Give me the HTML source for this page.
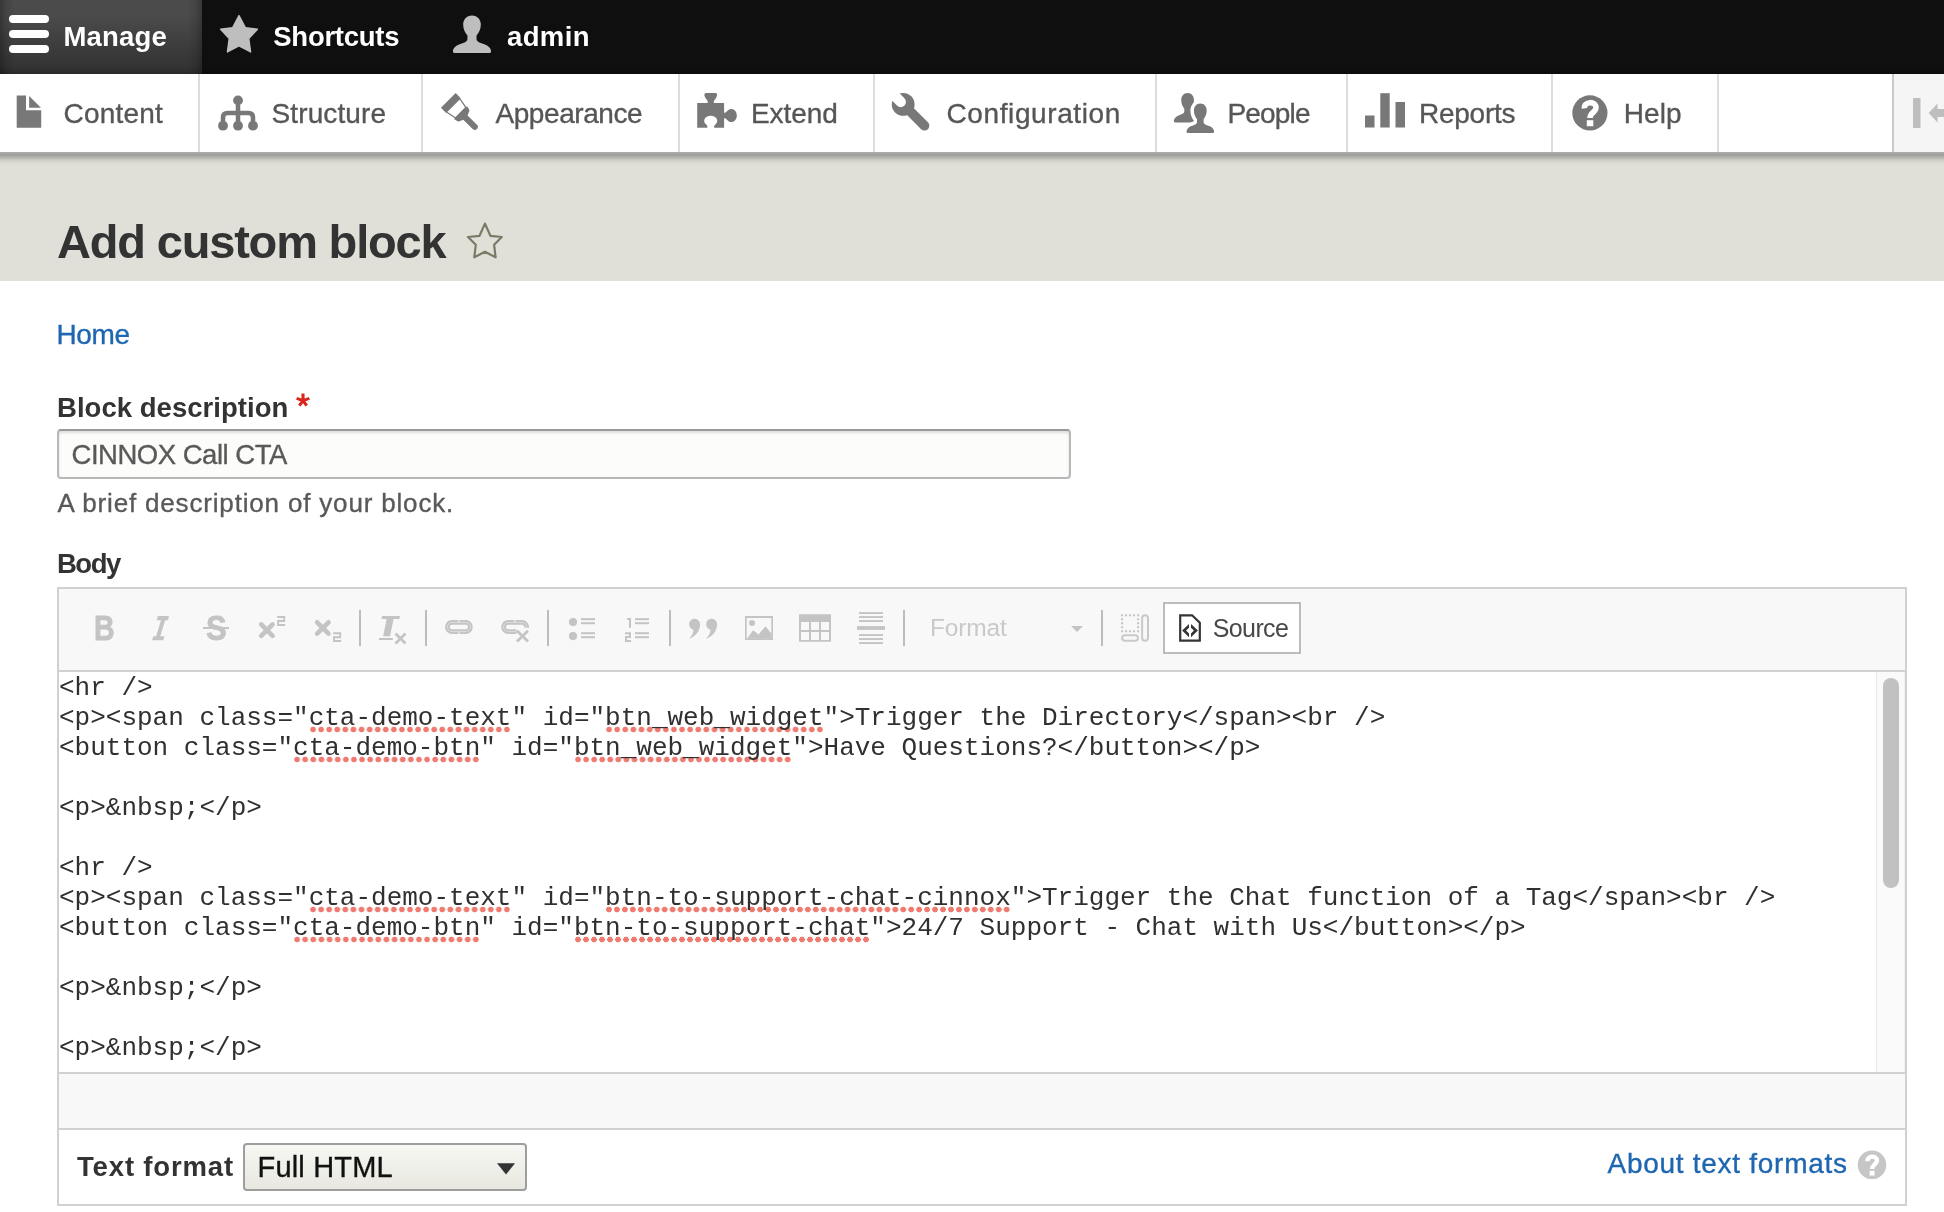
<!DOCTYPE html>
<html lang="en">
<head>
<meta charset="utf-8">
<title>Add custom block | Drupal</title>
<style>
html,body{margin:0;padding:0}
body{width:1944px;height:1212px;overflow:hidden;background:#fff;position:relative;font-family:"Liberation Sans",sans-serif}
.abs,.t{position:absolute}
.t{white-space:nowrap;line-height:1}
#page{position:absolute;left:0;top:0;width:1944px;height:1212px;overflow:hidden;will-change:transform;transform:translateZ(0)}
#bar{left:0;top:0;width:1944px;height:74px;background:#0f0f0f}
#manage{left:0;top:0;width:202px;height:74px;background:linear-gradient(90deg,rgba(0,0,0,.27),rgba(0,0,0,.1) 6px,rgba(0,0,0,0) 15px,rgba(0,0,0,0) 187px,rgba(0,0,0,.1) 196px,rgba(0,0,0,.27)),linear-gradient(rgba(255,255,255,.25) 20%,rgba(255,255,255,0) 200%),#0f0f0f}
#tray{left:-30px;top:74px;width:2004px;height:78px;background:#fff;box-shadow:0 2px 6px 2px rgba(0,0,0,.3333);border-bottom:2px solid #aaa;box-sizing:content-box}
.dv{top:74px;width:2px;height:78px;background:#ddd}
#hdr{left:0;top:152px;width:1944px;height:129px;background:#e0e0d8}
#toggle{left:1892px;top:74px;width:52px;height:78px;background:#f5f5f5;border-left:2px solid #c9c9c9}
#inp{left:57px;top:429px;width:1010px;height:46px;border:2px solid #b8b8b8;border-top-color:#999;border-radius:4px;background:#fcfcfa;box-shadow:inset 0 2px 3px rgba(0,0,0,.125)}
#wrap{left:57px;top:587px;width:1846px;height:615px;border:2px solid #d1d1d1;background:#fff}
#tb{left:59px;top:589px;width:1846px;height:81px;background:#f8f8f8;border-bottom:2px solid #d1d1d1}
#ta{left:59px;top:672px;width:1817px;height:400px;background:#fff;overflow:hidden}
#sbar{left:1876px;top:672px;width:29px;height:400px;background:#fafafa;box-shadow:inset 1px 0 0 #e8e8e8,inset -1px 0 0 #f0f0f0}
#thumb{left:1883px;top:678px;width:16px;height:210px;border-radius:8px;background:#c1c1c1}
#bot{left:59px;top:1072px;width:1846px;height:54px;background:#f8f8f8;border-top:2px solid #d1d1d1;border-bottom:2px solid #d1d1d1}
pre{margin:0;font-family:"Liberation Mono",monospace;font-size:26px;line-height:30px;color:#303030;position:absolute;left:0;top:1px;white-space:pre}
pre u{text-decoration:none;background-image:radial-gradient(circle at 50% 50%,#ee7a70 2.5px,rgba(238,122,112,0) 3.2px);background-size:8px 7px;background-repeat:round no-repeat;background-position:0 22.7px}
.sep{top:610px;width:2px;height:36px;background:#bcbcbc}
#src{left:1163px;top:602px;width:134px;height:48px;border:2px solid #bcbcbc;background:#fff}
#sel{left:243px;top:1143px;width:280px;height:44px;border:2px solid #9e9e9e;border-radius:4px;background:linear-gradient(#f7f7f3,#e8e8e0)}
</style>
</head>
<body>
<div id="page">
<div id="bar" class="abs"></div>
<div id="manage" class="abs"></div>
<div id="hdr" class="abs"></div>
<div id="tray" class="abs"></div>
<div class="abs dv" style="left:198px"></div>
<div class="abs dv" style="left:421px"></div>
<div class="abs dv" style="left:678px"></div>
<div class="abs dv" style="left:873px"></div>
<div class="abs dv" style="left:1155px"></div>
<div class="abs dv" style="left:1346px"></div>
<div class="abs dv" style="left:1551px"></div>
<div class="abs dv" style="left:1717px"></div>
<div id="toggle" class="abs"></div>
<div id="inp" class="abs"></div>
<div id="wrap" class="abs"></div>
<div id="tb" class="abs"></div>
<div id="ta" class="abs"><pre>&lt;hr /&gt;
&lt;p&gt;&lt;span class="<u>cta-demo-text</u>" id="<u>btn_web_widget</u>"&gt;Trigger the Directory&lt;/span&gt;&lt;br /&gt;
&lt;button class="<u>cta-demo-btn</u>" id="<u>btn_web_widget</u>"&gt;Have Questions?&lt;/button&gt;&lt;/p&gt;

&lt;p&gt;&amp;nbsp;&lt;/p&gt;

&lt;hr /&gt;
&lt;p&gt;&lt;span class="<u>cta-demo-text</u>" id="<u>btn-to-support-chat-cinnox</u>"&gt;Trigger the Chat function of a Tag&lt;/span&gt;&lt;br /&gt;
&lt;button class="<u>cta-demo-btn</u>" id="<u>btn-to-support-chat</u>"&gt;24/7 Support - Chat with Us&lt;/button&gt;&lt;/p&gt;

&lt;p&gt;&amp;nbsp;&lt;/p&gt;

&lt;p&gt;&amp;nbsp;&lt;/p&gt;</pre></div>
<div id="sbar" class="abs"></div>
<div id="thumb" class="abs"></div>
<div id="bot" class="abs"></div>
<div class="abs sep" style="left:359px"></div>
<div class="abs sep" style="left:425px"></div>
<div class="abs sep" style="left:547px"></div>
<div class="abs sep" style="left:669px"></div>
<div class="abs sep" style="left:903px"></div>
<div class="abs sep" style="left:1101px"></div>
<div id="src" class="abs"></div>
<div id="sel" class="abs"></div>
<svg class="abs" style="left:0;top:0" width="1944" height="1212" viewBox="0 0 1944 1212">
<defs>
<path id="person" d="M0,-7.3C-4.2,-7.3 -6.4,-3.8 -6.4,-0.3C-6.4,3.5 -4.8,6.6 -3.3,8.3V11C-3.3,13.2 -6,14 -9,15.2C-12,16.4 -13.8,18.6 -13.8,20.8Q-13.8,22.1 -12.5,22.1H12.5Q13.8,22.1 13.8,20.8C13.8,18.6 12,16.4 9,15.2C6,14 3.3,13.2 3.3,11V8.3C4.8,6.6 6.4,3.5 6.4,-0.3C6.4,-3.8 4.2,-7.3 0,-7.3Z"/>
</defs>
<!-- top bar: hamburger -->
<g fill="#fff">
<rect x="9" y="15" width="40" height="8" rx="4"/>
<rect x="9" y="30" width="40" height="8" rx="4"/>
<rect x="9" y="45" width="40" height="8" rx="4"/>
</g>
<!-- shortcuts star -->
<polygon fill="#bebebe" stroke="#bebebe" stroke-width="1.4" stroke-linejoin="round" points="239,15.6 245.3,27.6 257.4,29.2 248.8,38.6 250.6,52 239,45.9 227.4,52 229.2,38.6 220.6,29.2 232.7,27.6"/>
<!-- user -->
<use href="#person" fill="#bebebe" transform="translate(472,24.9) scale(1.38,1.275)"/>
<!-- tray icons -->
<g fill="#787878">
<!-- content -->
<path d="M16.7,95.4H26V110.2H41.2V127.8H16.7Z"/>
<path d="M29.1,95.9L41,107.8H29.1Z"/>
<!-- structure -->
<circle cx="238" cy="100.4" r="4.9"/><circle cx="223" cy="125.7" r="4.9"/><circle cx="238" cy="125.7" r="4.9"/><circle cx="253" cy="125.7" r="4.9"/>
<path d="M223,125.7V117.5Q223,113 227.5,113H248.5Q253,113 253,117.5V125.7M238,100.4V125.7" fill="none" stroke="#787878" stroke-width="4.5"/>
<!-- appearance (paint brush) -->
<g transform="translate(448.3,100.4) rotate(-45)">
<rect x="-10.4" y="0" width="20.8" height="6.9"/>
<path d="M-9.4,6.9L-7.4,17.5H7.4L9.4,6.9Z" fill="#fff" stroke="#787878" stroke-width="1.2"/>
<path d="M-8.4,17.3H8.4Q9.2,17.3 9,18.3L8.2,21.4Q7.9,22.4 6.8,22.6L3,24.2V37.5A3,3 0 0 1 -3,37.5V24.2L-6.8,22.6Q-7.9,22.4 -8.2,21.4L-9,18.3Q-9.2,17.3 -8.4,17.3Z"/>
</g>
<!-- extend (puzzle) -->
<path d="M697.2,103.1H707.5C708.5,101.5 707,100 705.5,98C704,96 704,93.1 706,93.1H715.5C717.5,93.1 717.5,96 716,98C714.5,100 713,101.5 714,103.1H724.1V112.5C725.5,113.5 727,111 729,109.5C731.5,108 736.8,109.5 736.8,115.5C736.8,121.5 731.5,123 729,121.5C727,120 725.5,117.5 724.1,118.5V127.8H714.3C713.3,126.3 714.8,125 716.3,123.5C718.5,121.2 717,115.8 710.7,115.8C704.4,115.8 703,121.2 705.2,123.5C706.7,125 708.2,126.3 707.2,127.8H697.2Z"/>
<!-- configuration (wrench) -->
<g transform="translate(903.2,104.4) rotate(45)">
<circle cx="0" cy="0" r="11.4"/>
<path d="M0,0H30.2" stroke="#787878" stroke-width="9.6" stroke-linecap="round" fill="none"/>
<path d="M-14,-5.2H-3.5A5.2,5.2 0 0 1 -3.5,5.2H-14Z" fill="#fff"/>
</g>
<!-- people -->
<use href="#person" transform="translate(1187.6,100.3)"/>
<use href="#person" transform="translate(1200.3,110.9)" stroke="#fff" stroke-width="7" paint-order="stroke"/>
<!-- reports -->
<rect x="1365" y="115.5" width="9.5" height="12"/><rect x="1380.3" y="93.2" width="9.4" height="34.3"/><rect x="1395.5" y="102" width="9.5" height="25.5"/>
<!-- help -->
<circle cx="1589.9" cy="112.9" r="17.6"/>
</g>
<path d="M1584.4,108.4C1583.6,101.2 1596,100.6 1596,107.6C1596,112.4 1590,112.6 1590,118" fill="none" stroke="#fff" stroke-width="5.6"/>
<rect x="1586.8" y="120.2" width="6.5" height="6" fill="#fff"/>
<!-- tray toggle -->
<g fill="#bebebe">
<rect x="1913" y="98" width="7.5" height="30"/>
<path d="M1928.7,113L1937.5,103.5V109H1944V117H1937.5V122.5Z"/>
</g>
<!-- shortcut star outline -->
<polygon fill="none" stroke="#7a7a66" stroke-width="2.2" stroke-linejoin="round" points="484.95,223.6 490.4,235.8 501.8,237 494.1,244.7 495.6,257.3 484.95,251.8 474.3,257.3 475.8,244.7 468,237 479.5,235.8"/>
<!-- required asterisk -->
<g stroke="#d9261c" stroke-width="3.1" stroke-linecap="butt">
<path d="M303,393.4V400.6M303,400.6L296.6,398.4M303,400.6L309.4,398.4M303,400.6L299.3,405.6M303,400.6L306.7,405.6"/>
</g>
<!-- CKEditor toolbar icons (disabled) -->
<g fill="#c4c4c4" stroke="none">
<!-- italic -->
<path d="M157.8,616H169L168,620.2H165.2L160.2,636.2H164.4L163.3,640.2H152.2L153.2,636.2H156.1L161,620.2H156.8Z"/>
<!-- strike line -->
<rect x="203" y="627" width="26" height="2"/>
<!-- superscript / subscript -->
<g stroke="#c4c4c4" fill="none">
<path d="M261.2,624.4L272.6,635.8M272.6,624.4L261.2,635.8" stroke-width="4.6" stroke-linecap="round"/>
<path d="M277.2,617H284.2V621H278.1V625H285.1" stroke-width="1.9"/>
<path d="M317.1,622.3L328.5,633.7M328.5,622.3L317.1,633.7" stroke-width="4.6" stroke-linecap="round"/>
<path d="M333.1,633.2H340.2V637.2H334V641H341.1" stroke-width="1.9"/>
<!-- remove format x -->
<path d="M395.5,633.5L405.5,643.5M405.5,633.5L395.5,643.5" stroke-width="2.8"/>
<!-- link -->
<rect x="447.4" y="622.4" width="23" height="9.2" rx="4.6" stroke-width="4.8"/>
<rect x="447.4" y="622.4" width="23" height="9.2" rx="4.6" stroke="#dcdcdc" stroke-width="1"/>
<path d="M458.9,620V622.6M458.9,631.4V634" stroke="#e4e4e4" stroke-width="1.6"/>
<!-- unlink -->
<path d="M516.5,631.6H508.2A4.6,4.6 0 0 1 508.2,622.4H522A4.6,4.6 0 0 1 526.5,627.6" stroke-width="4.8"/>
<path d="M516.5,631.6H508.2A4.6,4.6 0 0 1 508.2,622.4H522A4.6,4.6 0 0 1 526.5,627.6" stroke="#dcdcdc" stroke-width="1"/>
<path d="M515,620V622.6" stroke="#e4e4e4" stroke-width="1.6"/>
<path d="M517,630.8L528,641.4M528,630.8L517,641.4" stroke-width="2.8"/>
<!-- numbered list digits -->
<path d="M627.1,619.1H630V627.8" stroke-width="2"/>
<path d="M625,633.3H630V637.1H626V641H631" stroke-width="2"/>
<!-- show blocks -->
<path d="M1121.1,614.2h2v2h-2zM1121.1,630.2h2v2h-2zM1125.1,614.2h2v2h-2zM1125.1,630.2h2v2h-2zM1129.1,614.2h2v2h-2zM1129.1,630.2h2v2h-2zM1133.1,614.2h2v2h-2zM1133.1,630.2h2v2h-2zM1137.1,614.2h2v2h-2zM1137.1,630.2h2v2h-2zM1121.1,618.2h2v2h-2zM1137.1,618.2h2v2h-2zM1121.1,622.2h2v2h-2zM1137.1,622.2h2v2h-2zM1121.1,626.2h2v2h-2zM1137.1,626.2h2v2h-2z" fill="#c4c4c4" stroke="none"/>
<rect x="1142.1" y="615.2" width="5.9" height="25.6" rx="2.95" stroke="#c9c9c9" stroke-width="2"/>
<rect x="1122.1" y="635.2" width="15.9" height="5.6" rx="2.8" stroke="#c9c9c9" stroke-width="2"/>
</g>
<!-- remove format T -->
<path d="M382.1,616H400L399.3,619.1H393.6L390,636.2H383.1L386.6,619.1H381.4Z"/>
<rect x="379" y="638" width="13.8" height="2"/>
<!-- bullet list -->
<circle cx="573" cy="622.1" r="4.1"/><circle cx="573" cy="636.1" r="4.1"/>
<rect x="581" y="618.2" width="14" height="2"/><rect x="581" y="622.2" width="14" height="2"/><rect x="581" y="632.2" width="14" height="2"/><rect x="581" y="636.2" width="14" height="2"/>
<!-- numbered list lines -->
<rect x="635" y="618.2" width="14" height="2"/><rect x="635" y="622.2" width="14" height="2"/><rect x="635" y="632.2" width="14" height="2"/><rect x="635" y="636.2" width="14" height="2"/>
<!-- blockquote -->
<path id="q" d="M700.1,624.3A5.5,5.5 0 1 0 693.5,629.7C693.3,633 691.5,636 689,638.9C695.5,636.5 700.1,631 700.1,624.3Z"/>
<use href="#q" transform="translate(17,0)"/>
<!-- image -->
<path d="M745,616H773V640H745ZM746.7,618V638.4H771.3V618Z" fill-rule="evenodd"/>
<circle cx="752" cy="622.9" r="3"/>
<path d="M747,638.8L753.1,630.3L758.6,634.6L765.5,626.2L771.2,633.3V638.8Z"/>
<!-- table -->
<path d="M799,614.2H831V641.8H799ZM801,621.9V630.1H809V621.9ZM811,621.9V630.1H819V621.9ZM821,621.9V630.1H829V621.9ZM801,632V640.1H809V632ZM811,632V640.1H819V632ZM821,632V640.1H829V632Z" fill-rule="evenodd"/>
<!-- horizontal rule -->
<rect x="859" y="612.1" width="24" height="1.9"/><rect x="859" y="616.1" width="24" height="1.9"/><rect x="859" y="620.1" width="24" height="1.9"/>
<rect x="857" y="626.1" width="28" height="3.8"/>
<rect x="859" y="634.1" width="24" height="1.9"/><rect x="859" y="638.1" width="24" height="1.9"/><rect x="859" y="642.1" width="24" height="1.9"/>
<!-- format combo arrow -->
<path d="M1071.1,626.1H1082.9L1077,631.9Z"/>
</g>
<!-- source icon -->
<path d="M1180.2,615.3H1192.1L1199.8,622.7V640.7H1180.2Z" fill="none" stroke="#353535" stroke-width="2.2" stroke-linejoin="miter"/>
<path d="M1182.1,630.6L1189,624V627.8L1186.1,630.6L1189,633.4V637.2ZM1197.9,630.6L1191,624V627.8L1193.9,630.6L1191,633.4V637.2Z" fill="#353535"/>
<!-- select arrow -->
<path d="M497,1163.2H515L506,1174.6Z" fill="#333"/>
<!-- about text formats help -->
<circle cx="1872" cy="1164.8" r="14.3" fill="#c6c6c6"/>
<path d="M1867.6,1161.2C1867,1155.4 1877,1155 1877,1160.6C1877,1164.4 1872.1,1164.6 1872.1,1169" fill="none" stroke="#fff" stroke-width="4.4"/>
<rect x="1869.6" y="1170.8" width="5" height="4.8" fill="#fff"/>
</svg>

<span class="t" style="left:63.50px;top:23.00px;font-size:27.5px;font-weight:700;letter-spacing:0.162px;color:#fff">Manage</span>
<span class="t" style="left:273.25px;top:23.00px;font-size:27.5px;font-weight:700;letter-spacing:-0.256px;color:#fff">Shortcuts</span>
<span class="t" style="left:507.00px;top:23.00px;font-size:27.5px;font-weight:700;letter-spacing:0.391px;color:#fff">admin</span>
<span class="t" style="left:63.50px;top:100.00px;font-size:28.0px;font-weight:400;letter-spacing:0.202px;color:#565656;-webkit-text-stroke:0.35px #565656">Content</span>
<span class="t" style="left:271.50px;top:100.00px;font-size:28.0px;font-weight:400;letter-spacing:0.122px;color:#565656;-webkit-text-stroke:0.35px #565656">Structure</span>
<span class="t" style="left:495.50px;top:100.00px;font-size:28.0px;font-weight:400;letter-spacing:-0.437px;color:#565656;-webkit-text-stroke:0.35px #565656">Appearance</span>
<span class="t" style="left:751.00px;top:100.00px;font-size:28.0px;font-weight:400;letter-spacing:-0.070px;color:#565656;-webkit-text-stroke:0.35px #565656">Extend</span>
<span class="t" style="left:946.50px;top:100.00px;font-size:28.0px;font-weight:400;letter-spacing:0.606px;color:#565656;-webkit-text-stroke:0.35px #565656">Configuration</span>
<span class="t" style="left:1227.50px;top:100.00px;font-size:28.0px;font-weight:400;letter-spacing:-0.823px;color:#565656;-webkit-text-stroke:0.35px #565656">People</span>
<span class="t" style="left:1419.00px;top:100.00px;font-size:28.0px;font-weight:400;letter-spacing:-0.257px;color:#565656;-webkit-text-stroke:0.35px #565656">Reports</span>
<span class="t" style="left:1623.75px;top:100.00px;font-size:28.0px;font-weight:400;letter-spacing:0.079px;color:#565656;-webkit-text-stroke:0.35px #565656">Help</span>
<span class="t" style="left:57.00px;top:218.00px;font-size:47.0px;font-weight:700;letter-spacing:-1.182px;color:#333">Add custom block</span>
<span class="t" style="left:56.50px;top:321.00px;font-size:28.0px;font-weight:400;letter-spacing:-0.372px;color:#1f66b1;-webkit-text-stroke:0.35px #1f66b1">Home</span>
<span class="t" style="left:57.00px;top:394.00px;font-size:27.5px;font-weight:700;letter-spacing:0.035px;color:#333">Block description</span>
<span class="t" style="left:71.50px;top:441.00px;font-size:27.5px;font-weight:400;letter-spacing:-0.480px;color:#595959;-webkit-text-stroke:0.35px #595959">CINNOX Call CTA</span>
<span class="t" style="left:57.50px;top:490.00px;font-size:26.0px;font-weight:400;letter-spacing:0.826px;color:#595959;-webkit-text-stroke:0.35px #595959">A brief description of your block.</span>
<span class="t" style="left:57.00px;top:550.00px;font-size:27.5px;font-weight:700;letter-spacing:-1.485px;color:#333">Body</span>
<span class="t" style="left:930.00px;top:616.00px;font-size:24.5px;font-weight:400;letter-spacing:-0.157px;color:#c9c9c9">Format</span>
<span class="t" style="left:1212.75px;top:616.00px;font-size:25.0px;font-weight:400;letter-spacing:-0.612px;color:#484848">Source</span>
<span class="t" style="left:77.00px;top:1153.00px;font-size:27.5px;font-weight:700;letter-spacing:0.845px;color:#333">Text format</span>
<span class="t" style="left:257.50px;top:1153.00px;font-size:29.0px;font-weight:400;letter-spacing:0.175px;color:#111;-webkit-text-stroke:0.35px #111">Full HTML</span>
<span class="t" style="left:1607.50px;top:1150.00px;font-size:28.0px;font-weight:400;letter-spacing:0.723px;color:#1f66b1;-webkit-text-stroke:0.35px #1f66b1">About text formats</span>
<span class="t" style="left:93.59px;top:611.00px;font-size:35.5px;font-weight:700;color:#c4c4c4;-webkit-text-stroke:0.8px #c4c4c4;transform-origin:0 0;transform:scaleX(0.804)">B</span>
<span class="t" style="left:205.81px;top:610.00px;font-size:35.0px;font-weight:700;color:#c4c4c4;-webkit-text-stroke:0.8px #c4c4c4;transform-origin:0 0;transform:scaleX(0.886)">S</span>
</div>
</body>
</html>
